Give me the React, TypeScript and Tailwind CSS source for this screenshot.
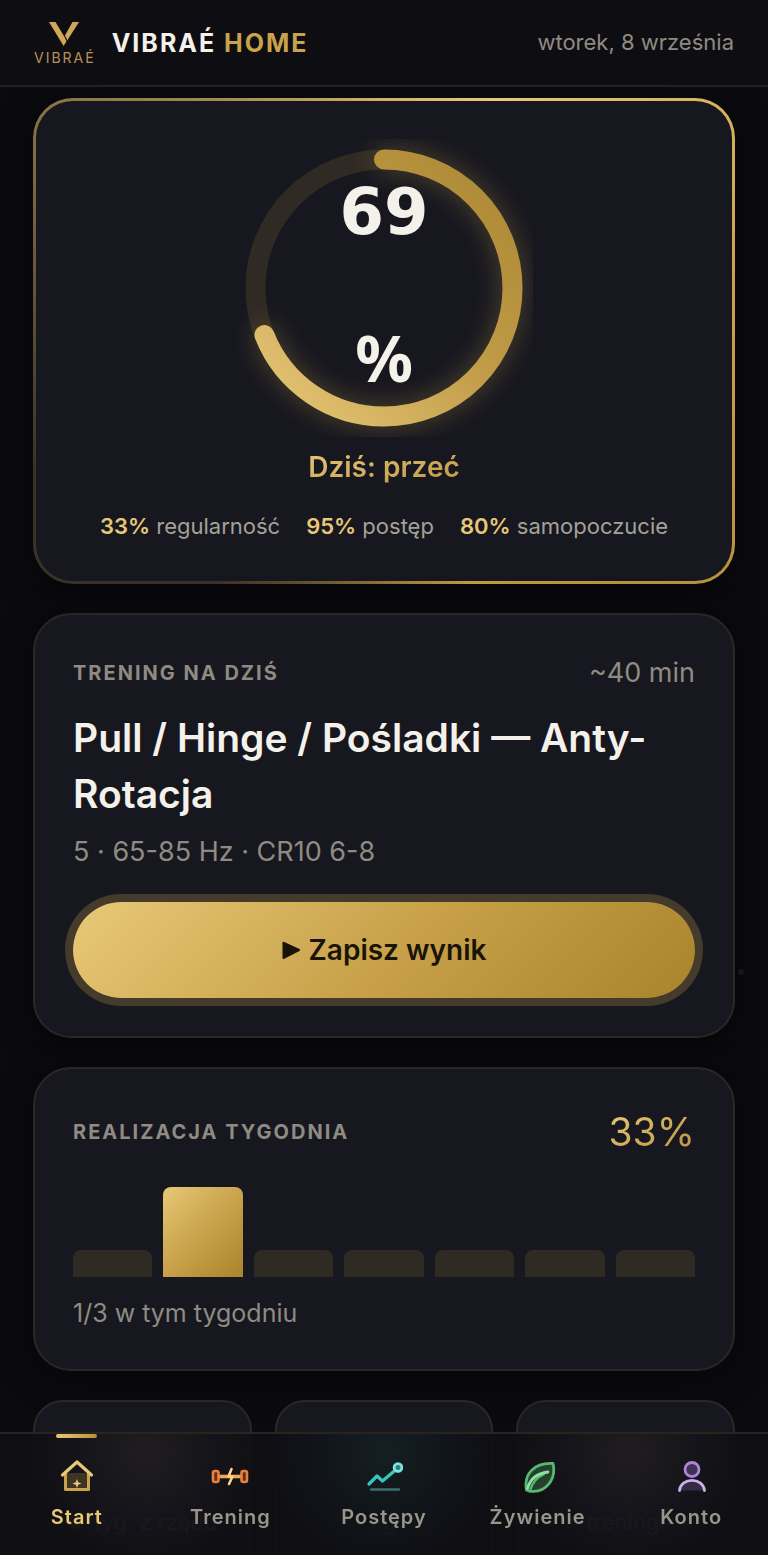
import { useState } from "react";
import clsx from "clsx";

const SPLIT = [
  { value: "33%", label: "regularność" },
  { value: "95%", label: "postęp" },
  { value: "80%", label: "samopoczucie" },
];

const WEEK = [false, true, false, false, false, false, false];

const STATS = ["tyg. z rzędu", "kg", "treningi"];

const TABS = [
  { id: "start", label: "Start", Icon: HomeIcon },
  { id: "trening", label: "Trening", Icon: BarbellIcon },
  { id: "postepy", label: "Postępy", Icon: TrendIcon },
  { id: "zywienie", label: "Żywienie", Icon: LeafIcon },
  { id: "konto", label: "Konto", Icon: UserIcon },
];

function Mark() {
  return (
    <svg width="30" height="24" viewBox="0 0 30 24" fill="#cfa75a" aria-hidden="true">
      <path d="M0 0H6.5L15.5 15L17.5 19.2L14.6 24Z" />
      <path d="M23.5 0H30L18.4 18.2L15.9 13.4Z" />
    </svg>
  );
}

function HomeIcon() {
  return (
    <svg width="36" height="36" viewBox="0 0 36 36" fill="none" aria-hidden="true">
      <path d="M7 15H29V31H7Z" fill="#3f3424" />
      <path d="M6.500 15V31.500H29.500V15" stroke="#c9a24b" strokeWidth="3" strokeLinejoin="round" />
      <path d="M3.500 17L18 4L32.500 17" stroke="#e8c877" strokeWidth="3.200" strokeLinecap="round" strokeLinejoin="round" />
      <path d="M18 21L19.200 24.300L22.500 25.500L19.200 26.700L18 30L16.800 26.700L13.500 25.500L16.800 24.300Z" fill="#e8c877" />
    </svg>
  );
}

function BarbellIcon() {
  return (
    <svg width="38" height="36" viewBox="0 0 38 36" fill="none" aria-hidden="true">
      <path d="M7 18.500H31" stroke="#f6a45c" strokeWidth="3.600" />
      <rect x="2" y="13" width="5.500" height="11" rx="2" fill="#5a331d" stroke="#e8813a" strokeWidth="2.600" />
      <rect x="30.500" y="13" width="5.500" height="11" rx="2" fill="#5a331d" stroke="#e8813a" strokeWidth="2.600" />
      <path d="M20.500 11L17.500 18.500H21.500L18 26" stroke="#ffd28a" strokeWidth="2.600" strokeLinecap="round" strokeLinejoin="round" />
    </svg>
  );
}

function TrendIcon() {
  return (
    <svg width="38" height="36" viewBox="0 0 38 36" fill="none" aria-hidden="true">
      <path d="M6 31.500H34" stroke="#3b6f70" strokeWidth="2.400" strokeLinecap="round" />
      <path d="M4 26L12 18L17.500 23L30.500 12" stroke="#35c6bd" strokeWidth="3.200" strokeLinecap="round" strokeLinejoin="round" />
      <circle cx="33" cy="9.500" r="3.900" fill="#2c7f80" stroke="#7ce3de" strokeWidth="2.800" />
    </svg>
  );
}

function LeafIcon() {
  return (
    <svg width="36" height="36" viewBox="-3 -1 36 36" fill="none" aria-hidden="true">
      <path d="M4.500 31C1.500 15 12 3.500 31 4.500C34.500 20 24 35 7 32Z" transform="translate(-1 0)" fill="#263f2e" stroke="#56b96f" strokeWidth="2.800" strokeLinejoin="round" />
      <path d="M7.500 30C10 23 14 18.500 20.500 15.500" stroke="#56b96f" strokeWidth="2.400" strokeLinecap="round" />
      <path d="M4.500 29.500C7 20 14 14.500 25 13" stroke="#8fe0a0" strokeWidth="2.800" strokeLinecap="round" />
    </svg>
  );
}

function UserIcon() {
  return (
    <svg width="36" height="36" viewBox="-1 -1 36 36" fill="none" aria-hidden="true">
      <circle cx="18" cy="10.500" r="7" fill="#3f3252" stroke="#ad85d6" strokeWidth="2.800" />
      <path d="M5.500 31.500C7 18 29 18 30.500 31.500" fill="#352b45" stroke="#cdb0ea" strokeWidth="2.800" strokeLinecap="round" />
    </svg>
  );
}

function Ring({ value }: { value: number }) {
  const r = 128.5;
  const len = 2 * Math.PI * r;

  return (
    <div className="relative size-[298px]">
      <svg className="size-full" viewBox="0 0 298 298" fill="none" aria-hidden="true">
        <defs>
          {/* the arc is rotated by -90deg, so this ends up bottom-left to top-right */}
          <linearGradient id="ring" x1="40" y1="40" x2="258" y2="258" gradientUnits="userSpaceOnUse">
            <stop offset="0" stopColor="#e2c372" />
            <stop offset="0.55" stopColor="#c09b48" />
            <stop offset="1" stopColor="#ad8a36" />
          </linearGradient>
        </defs>
        <circle cx="149" cy="149" r={r} stroke="#2f2a24" strokeWidth="20" />
        <g className="drop-shadow-[0_0_13px_rgba(201,162,75,0.35)]">
          <circle
            cx="149"
            cy="149"
            r={r}
            stroke="url(#ring)"
            strokeWidth="20"
            strokeLinecap="round"
            strokeDasharray={`${(len * value) / 100} ${len}`}
            transform="rotate(-90 149 149)"
          />
        </g>
      </svg>
      <div className="absolute inset-x-0 top-0 flex flex-col items-center text-[#f4f1ea] text-[64px] font-bold leading-[146px]">
        <span className="font-['DejaVu_Sans',sans-serif]">{value}</span>
        <span className="font-['Noto_Sans',sans-serif]">%</span>
      </div>
    </div>
  );
}

function Card({ children }: { children: React.ReactNode }) {
  return (
    <section className="rounded-[38px] border-2 border-[#2c2724] bg-[#17171f] p-[38px] shadow-[0_8px_40px_rgba(0,0,0,0.4)]">
      {children}
    </section>
  );
}

export default function App() {
  const [tab, setTab] = useState("start");

  return (
    <div className="relative h-screen overflow-y-auto [scrollbar-width:none] bg-[#0a0a0f] font-[Inter,sans-serif] text-[#f4f1ea]">
      <header className="sticky top-0 z-20 flex h-[87px] items-center justify-between border-b-2 border-[#25211c] bg-[#0e0e12] px-[34px]">
        <div className="flex items-center gap-[18px]">
          <div className="flex flex-col items-center pt-[2px]">
            <Mark />
            <span className="-mr-[2px] mt-1 text-[14px] leading-4 tracking-[2px] text-[#b8935a]">VIBRAÉ</span>
          </div>
          <span className="text-[25px] font-bold leading-8 tracking-[2px]">
            VIBRAÉ <span className="text-[#c9a24b]">HOME</span>
          </span>
        </div>
        <time className="text-[22px] text-[#8f8b82]">wtorek, 8 września</time>
      </header>

      {/* background speck */}
      <i className="absolute right-6 top-[969px] size-[6px] rounded-full bg-[#1a1712]" />

      <main className="flex flex-col gap-[29px] px-[33px] pt-[11px]">
        <div className="rounded-[40px] bg-[conic-gradient(#d2b167_0deg,#e8c877_25deg,#c9a24b_80deg,#b8923a_130deg,#c49b42_160deg,#3a3226_215deg,#3a3226_250deg,#8f7a4a_310deg,#d2b167_360deg)] p-[3px] shadow-[0_8px_40px_rgba(0,0,0,0.4)]">
          <section className="flex flex-col items-center rounded-[37px] bg-[#17171f] p-[38px]">
            <Ring value={69} />
            <h2 className="mt-[10px] bg-linear-to-br from-[#e8c877] to-[#bd9644] bg-clip-text text-[28px] font-semibold leading-10 text-transparent">
              Dziś: przeć
            </h2>
            <div className="mt-[22px] flex gap-[26px] text-[22px] leading-[34px] text-[#a5a199]">
              {SPLIT.map((s) => (
                <span key={s.label}>
                  <b className="font-semibold text-[#e8c877]">{s.value}</b> {s.label}
                </span>
              ))}
            </div>
          </section>
        </div>

        <Card>
          <div className="flex h-10 items-center justify-between text-[#8f8b82]">
            <h3 className="text-[20px] font-bold tracking-[2px]">TRENING NA DZIŚ</h3>
            <span className="text-[27px]">~40 min</span>
          </div>
          <h2 className="mt-[17px] text-[39px] font-semibold leading-[56px]">
            Pull / Hinge / Pośladki — Anty-Rotacja
          </h2>
          <p className="mt-[9px] text-[27px] leading-[42px] text-[#8f8b82]">5 · 65-85 Hz · CR10 6-8</p>
          <button className="mt-[29px] flex h-24 w-full items-center justify-center gap-2 rounded-full bg-linear-[135deg] from-[#e8c877] via-[#c9a24b] to-[#a8842c] text-[28px] font-semibold text-[#1a1408] ring-8 ring-[#453b2a]">
            <svg width="19" height="19" viewBox="0 0 19 19" fill="currentColor" aria-hidden="true">
              <path d="M0.500 2.200Q0.500 0.300 2.300 1L17.500 8Q19 9 17.500 10L2.300 17.800Q0.500 18.500 0.500 16.800Z" />
            </svg>
            Zapisz wynik
          </button>
        </Card>

        <Card>
          <div className="flex h-[50px] items-center justify-between">
            <h3 className="text-[20px] font-bold tracking-[2px] text-[#8f8b82]">REALIZACJA TYGODNIA</h3>
            <span className="bg-linear-to-br from-[#e8c877] to-[#b8923a] bg-clip-text text-[39px] leading-[50px] text-transparent">
              33%
            </span>
          </div>
          <div className="mt-[30px] flex h-[90px] items-end gap-[11px]">
            {WEEK.map((done, i) => (
              <div
                key={i}
                className={clsx(
                  "flex-1 rounded-t-lg",
                  done ? "h-full bg-linear-[135deg] from-[#e8c877] via-[#c9a24b] to-[#a8842c]" : "h-[27px] bg-[#2f2a24]"
                )}
              />
            ))}
          </div>
          <p className="mt-[18px] text-[25px] leading-9 text-[#8f8b82]">1/3 w tym tygodniu</p>
        </Card>

        <div className="grid grid-cols-3 gap-[23px]">
          {STATS.map((label, i) => (
            <div
              key={label}
              className="flex h-[200px] items-center justify-center gap-3 rounded-[30px] border-2 border-[#2c2724] bg-[#17171f] pt-11 text-[22px] text-[#8f8b82]"
            >
              {i === 0 && <i className="size-[14px] rounded-full bg-[#e8813a]" />}
              {label}
            </div>
          ))}
        </div>
      </main>

      <nav className="fixed inset-x-0 bottom-0 z-20 grid h-[123px] grid-cols-5 border-t-2 border-[#2a241d] bg-[#0f0f14]/94 bg-[radial-gradient(circle_at_19%_15%,#1e1c21_10px,transparent_110px),radial-gradient(circle_at_50%_15%,#141d20_10px,transparent_110px),radial-gradient(circle_at_82%_15%,#1e1c21_10px,transparent_110px)]">
        {TABS.map(({ id, label, Icon }) => (
          <button
            key={id}
            onClick={() => setTab(id)}
            className={clsx(
              "relative flex flex-col items-center gap-[7px] pt-6 text-[20px] font-semibold leading-8 tracking-[1px]",
              tab === id ? "text-[#e8c877]" : "text-[#99958b]"
            )}
          >
            {tab === id && (
              <span className="absolute top-0 h-1 w-[41px] rounded-full bg-linear-to-r from-[#e8c877] to-[#b8923a]" />
            )}
            <Icon />
            {label}
          </button>
        ))}
      </nav>
    </div>
  );
}
